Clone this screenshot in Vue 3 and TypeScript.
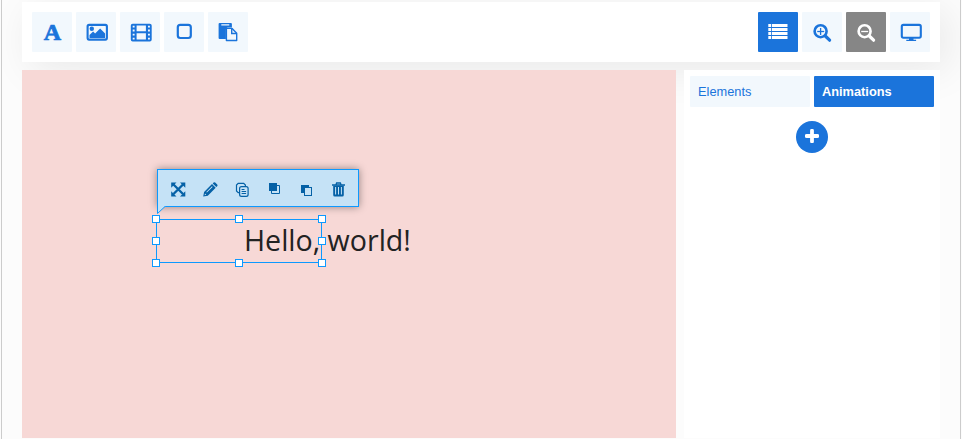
<script setup lang="ts">
import { ref } from 'vue'

type Tab = 'Elements' | 'Animations'

interface Tool {
  icon: string
  label: string
  state?: 'active' | 'disabled'
}

const insertTools: Tool[] = [
  { icon: 'text', label: 'Text' },
  { icon: 'image', label: 'Image' },
  { icon: 'film', label: 'Video' },
  { icon: 'shape', label: 'Shape' },
  { icon: 'paste', label: 'Paste' },
]

const viewTools: Tool[] = [
  { icon: 'list', label: 'List', state: 'active' },
  { icon: 'zoom-in', label: 'Zoom in' },
  { icon: 'zoom-out', label: 'Zoom out', state: 'disabled' },
  { icon: 'screen', label: 'Preview' },
]

const toolGroups: Tool[][] = [insertTools, viewTools]
const tabs: Tab[] = ['Elements', 'Animations']
const current = ref<Tab>('Animations')
const actions: string[] = ['move', 'edit', 'copy', 'front', 'back', 'delete']
const handles: string[] = ['nw', 'n', 'ne', 'w', 'e', 'sw', 's', 'se']
</script>

<template>
  <div class="frame">
    <header class="toolbar">
      <div v-for="(group, g) in toolGroups" :key="g" class="group">
        <button
          v-for="tool in group"
          :key="tool.icon"
          class="tool"
          :class="tool.state"
          :aria-label="tool.label"
        >
          <span v-if="tool.icon === 'text'" class="letter">A</span>
          <svg v-else viewBox="0 0 40 40" width="40" height="40" fill="currentColor">
            <template v-if="tool.icon === 'image'">
              <rect x="11.6" y="12.9" width="19.3" height="14.7" rx="1.5" fill="none" stroke="currentColor" stroke-width="2.1" />
              <circle cx="15.8" cy="16.800" r="2.2" />
              <path d="M13.500 26v-3l3.600-3.500 2 2 5-5 5 5v4.500z" />
            </template>
            <path
              v-else-if="tool.icon === 'film'"
              fill-rule="evenodd"
              d="M12.700 11.700h17.100q1.900 0 1.900 1.900v14q0 1.900-1.900 1.900H12.700q-1.900 0-1.900-1.900V13.600q0-1.900 1.900-1.900zM16.600 13.500v5.700h9.300v-5.700zM16.600 21.300v6.200h9.300v-6.200zM12.700 13.700v1.700h1.900v-1.700zM12.700 17.600v1.800h1.900v-1.800zM12.700 21.700v1.800h1.900v-1.800zM12.700 25.700v1.700h1.900v-1.700zM28 13.700v1.700h1.900v-1.700zM28 17.600v1.800h1.900v-1.800zM28 21.700v1.800h1.900v-1.800zM28 25.700v1.700h1.900v-1.700z"
            />
            <rect v-else-if="tool.icon === 'shape'" x="13.800" y="12.800" width="13" height="13.200" rx="2.500" fill="none" stroke="currentColor" stroke-width="2.200" />
            <template v-else-if="tool.icon === 'paste'">
              <path fill-rule="evenodd" d="M11.600 11h11.300q1 0 1 1v3.500h-4q-2 0-2 2v9.500h-6.300q-1 0-1-1V12q0-1 1-1zM13.300 12.200v1.400h8v-1.400z" />
              <path d="M18.400 16.400h5.700l4.600 4.800v7.300H18.400z" fill="#f2f8fd" stroke="currentColor" stroke-width="1.400" stroke-linejoin="round" />
              <path d="M23.700 16.500v5h5" fill="none" stroke="currentColor" stroke-width="1.400" />
            </template>
            <template v-else-if="tool.icon === 'list'">
              <path d="M10.300 12h2.800v3.100h-2.800zM13.900 12h15.600v3.100H13.900zM10.300 16h2.800v3.100h-2.800zM13.900 16h15.600v3.100H13.900zM10.300 20h2.800v3.100h-2.800zM13.900 20h15.600v3.100H13.900zM10.300 24h2.800v3.100h-2.800zM13.900 24h15.600v3.100H13.900z" />
            </template>
            <template v-else-if="tool.icon === 'zoom-in' || tool.icon === 'zoom-out'">
              <circle cx="18.600" cy="19.200" r="6" fill="none" stroke="currentColor" stroke-width="2.600" />
              <path d="M23.300 24l4.300 4.200" fill="none" stroke="currentColor" stroke-width="3.200" stroke-linecap="round" />
              <path d="M15.200 19.500h7" fill="none" stroke="currentColor" stroke-width="1.300" />
              <path v-if="tool.icon === 'zoom-in'" d="M18.600 16v7" stroke="currentColor" stroke-width="1.300" />
            </template>
            <template v-else>
              <rect x="11.800" y="12.900" width="19" height="12.800" rx="1.600" fill="none" stroke="currentColor" stroke-width="2.100" />
              <path d="M19 26h4.500v1.700h2.600v1.300h-9.800v-1.300H19z" />
            </template>
          </svg>
        </button>
      </div>
    </header>

    <div class="workspace">
      <main class="canvas">
        <div class="element">
          <span class="content">Hello, world!</span>
          <i v-for="h in handles" :key="h" class="handle" :class="h"></i>
        </div>
        <div class="actions">
          <svg class="tail" width="9" height="9" viewBox="0 0 9 9">
            <path d="M0 0h8.500L.5 7.500z" fill="#c5e2f6" />
            <path d="M.5 0v7.500L8 .5" fill="none" stroke="#0d99ff" />
          </svg>
          <button v-for="action in actions" :key="action" class="action" :aria-label="action">
            <svg viewBox="0 0 16 16" width="16" height="16" fill="currentColor">
              <template v-if="action === 'move'">
                <path d="M3.500 3.500l9.500 9.500M13 3.500L3.500 13" fill="none" stroke="currentColor" stroke-width="2.300" />
                <path d="M1.200 1.500h5.300L1.200 6.800zM15.300 1.500v5.300L10 1.500zM1.200 15.500v-5.300l5.300 5.300zM15.300 15.500H10l5.300-5.300z" />
              </template>
              <template v-else-if="action === 'edit'">
                <path fill-rule="evenodd" d="M1.200 15.600l.9-4.600L10 3.100l3.700 3.700-7.900 7.900zM2.600 14.200l1.700-.4-1.300-1.300zM4.300 11l.6.600 5.700-5.700-.6-.600z" />
                <path d="M10.700 2.400l.9-.9q.8-.700 1.600.1l2 2q.8.800 0 1.600l-.9.900z" />
              </template>
              <g v-else-if="action === 'copy'" fill="none" stroke="currentColor" stroke-width="1.200">
                <path d="M5 11.700H4.200L2.500 9.900V4.100l1.700-1.800h5.500l1.700 1.800v1" />
                <rect x="5.600" y="5.600" width="8.500" height="9.800" rx="1.900" />
                <path d="M7.600 8.500h2.900M7.600 10.500h4.500M7.600 12.500h4.500" />
              </g>
              <template v-else-if="action === 'front'">
                <path d="M11 4.500h2.500v8h-8V10" fill="none" stroke="currentColor" stroke-width="1" />
                <rect x="3" y="2" width="8" height="8" />
              </template>
              <template v-else-if="action === 'back'">
                <path d="M3 4h8v3H6v5H3z" />
                <rect x="6.500" y="6.500" width="7" height="8" fill="#c5e2f6" stroke="currentColor" />
              </template>
              <template v-else>
                <path fill-rule="evenodd" d="M3.200 4.500h10.600V14q0 1.500-1.500 1.500H4.700q-1.500 0-1.500-1.500zM5.100 6v7.500h1V6zM8 6v7.500h1V6zM10.900 6v7.500h1V6z" />
                <path d="M2 4h13M5.900 4l.7-2h3.800l.7 2" fill="none" stroke="currentColor" stroke-width="1.300" />
              </template>
            </svg>
          </button>
        </div>
      </main>

      <aside class="panel">
        <nav class="tabs">
          <button v-for="tab in tabs" :key="tab" class="tab" :class="{ selected: tab === current }" @click="current = tab">
            {{ tab }}
          </button>
        </nav>
        <button class="add" aria-label="Add">
          <svg width="14" height="14" viewBox="0 0 14 14">
            <path d="M7 1.600v10.800M1.600 7h10.800" fill="none" stroke="#fff" stroke-width="3.800" stroke-linecap="round" />
          </svg>
        </button>
      </aside>
    </div>
  </div>
</template>

<style>
body {
  background: #fcfcfc;
  overflow: hidden;
}
</style>

<style scoped>
.frame {
  box-sizing: border-box;
  height: 439px;
  margin: 0 1px;
  padding: 2px 20px 1px;
  border: solid #ccc;
  border-width: 0 1px;
  background: #fcfcfc;
  font-family: 'Liberation Sans', Arial, sans-serif;
  overflow: hidden;
}

button {
  border: 0;
  padding: 0;
  margin: 0;
  font: inherit;
}

svg {
  display: block;
}

.toolbar {
  box-sizing: border-box;
  display: flex;
  justify-content: space-between;
  height: 60px;
  padding: 10px;
  margin-bottom: 8px;
  background: #fff;
  box-shadow: 8px 8px 40px rgba(0, 0, 0, 0.08);
}

.group {
  display: flex;
  gap: 4px;
}

.tool {
  width: 40px;
  height: 40px;
  border-radius: 1px;
  background: #f2f8fd;
  color: #1b74db;
}

.tool.active {
  background: #1b74db;
  color: #fff;
}

.tool.disabled {
  background: #868686;
  color: #fff;
}

.letter {
  display: block;
  padding-left: 1px;
  font: bold 24px/40px 'Liberation Serif', serif;
  -webkit-text-stroke: 0.7px currentColor;
}

.workspace {
  position: relative;
  display: flex;
  gap: 8px;
  height: 368px;
}

.canvas {
  position: relative;
  flex: 1;
  background: #f7d8d6;
}

.element {
  position: absolute;
  left: 134px;
  top: 149px;
  width: 164px;
  height: 42px;
  border: 1px solid #0d99ff;
}

.content {
  display: block;
  margin-left: 87px;
  font: 28.600px/40px 'Open Sans', sans-serif;
  color: #222;
  white-space: nowrap;
}

.handle {
  position: absolute;
  box-sizing: border-box;
  width: 8px;
  height: 8px;
  border: 1px solid #0d99ff;
  background: #fff;
}

.nw, .w, .sw { left: -5px; }
.n, .s { left: 78px; }
.ne, .e, .se { right: -5px; }
.nw, .n, .ne { top: -5px; }
.w, .e { top: 17px; }
.sw, .s, .se { bottom: -5px; }

.actions {
  position: absolute;
  left: 135px;
  top: 99px;
  box-sizing: border-box;
  display: flex;
  align-items: center;
  gap: 16px;
  width: 202px;
  height: 38px;
  padding: 2px 12px 0;
  border: 1px solid #0d99ff;
  background: #c5e2f6;
  box-shadow: 0 0 8px rgba(0, 0, 0, 0.4);
}

.tail {
  position: absolute;
  left: -1px;
  top: 36px;
}

.action {
  width: 16px;
  height: 16px;
  background: none;
  color: #0561a6;
}

.panel {
  box-sizing: border-box;
  display: flex;
  flex-direction: column;
  align-items: center;
  width: 256px;
  padding: 6px;
  background: #fff;
}

.tabs {
  display: flex;
  gap: 4px;
  margin-bottom: 14px;
}

.tab {
  width: 120px;
  height: 31px;
  padding: 0 8px;
  border-radius: 1px;
  background: #f2f8fd;
  color: #1b74db;
  font-size: 12.800px;
  text-align: left;
}

.tab.selected {
  background: #1b74db;
  color: #fff;
  font-weight: bold;
}

.add {
  display: flex;
  align-items: center;
  justify-content: center;
  width: 32px;
  height: 32px;
  padding-bottom: 2px;
  border-radius: 50%;
  background: #1b74db;
}
</style>
